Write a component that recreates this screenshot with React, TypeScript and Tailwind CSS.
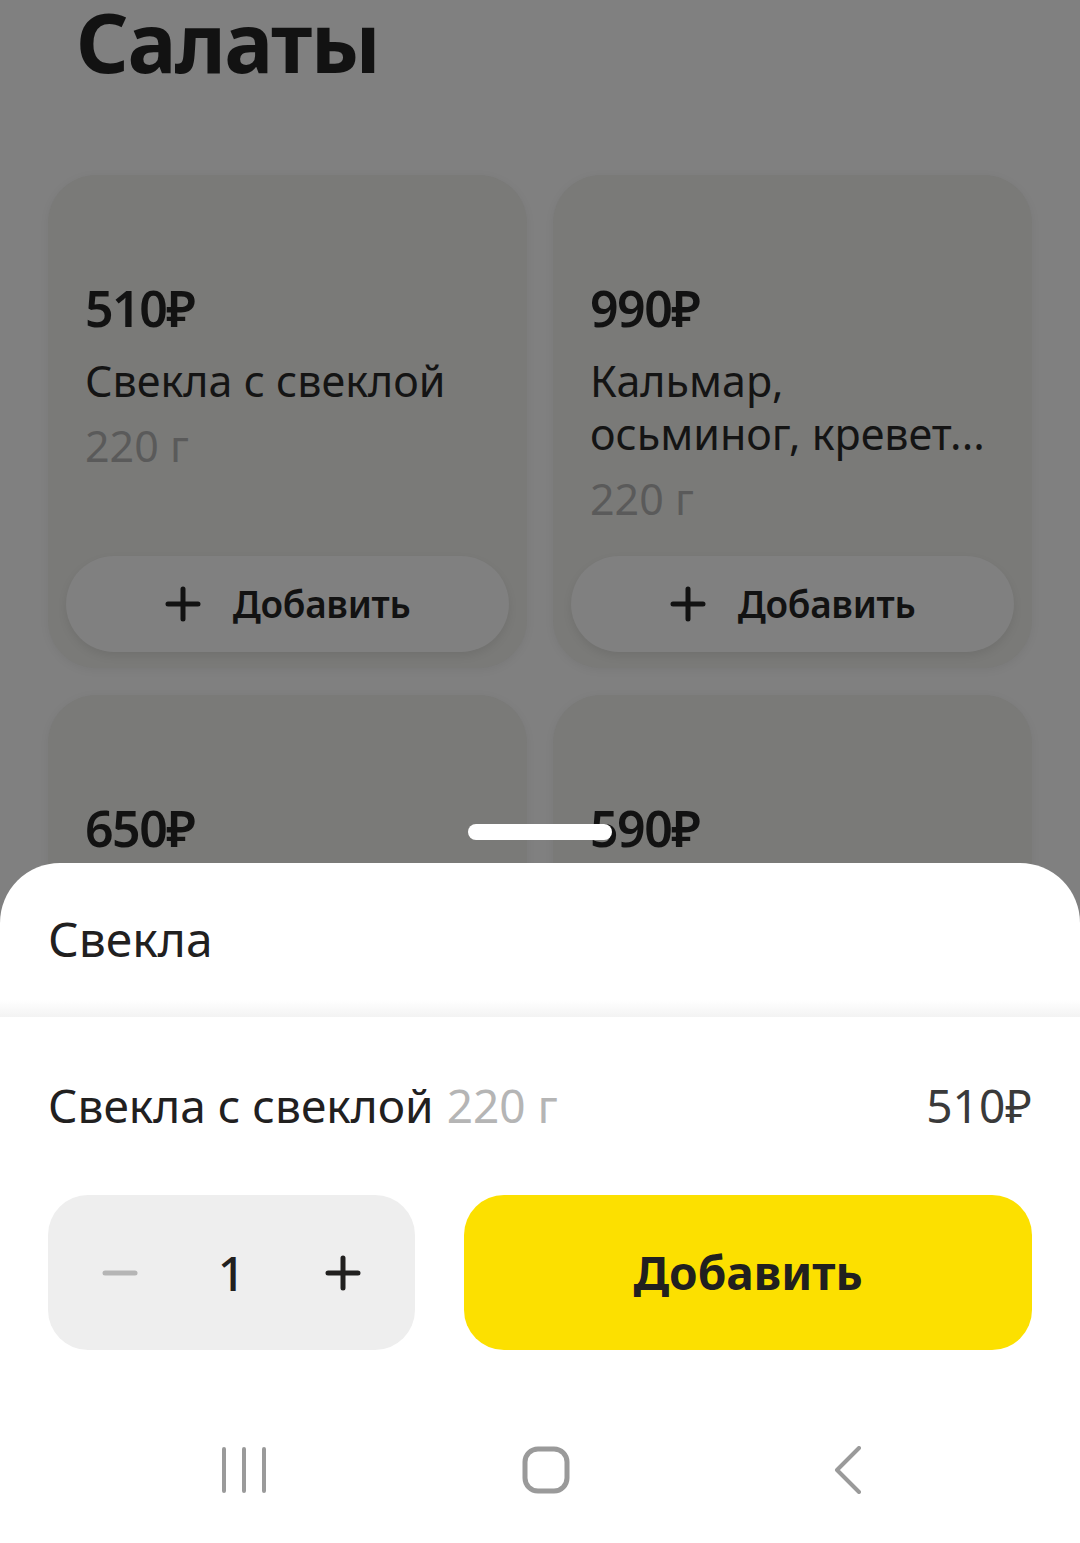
import React from 'react';

type Dish = {
  price: string;
  name?: React.ReactNode;
  weight?: string;
};

// the second row is hidden under the sheet, only the prices show
const dishes: Dish[] = [
  { price: '510₽', name: 'Свекла с свеклой', weight: '220 г' },
  {
    price: '990₽',
    name: (
      <>
        Кальмар,
        <br />
        осьминог, кревет...
      </>
    ),
    weight: '220 г',
  },
  { price: '650₽' },
  { price: '590₽' },
];

function PlusIcon({ className }: { className?: string }) {
  return (
    <svg viewBox="0 0 36 36" className={className} fill="none">
      <path d="M18 3v30M3 18h30" stroke="currentColor" strokeWidth="5" strokeLinecap="round" />
    </svg>
  );
}

function DishCard({ dish }: { dish: Dish }) {
  return (
    <div className="flex h-[493px] flex-col rounded-[48px] bg-[#7a7a78] shadow-[0_2px_10px_rgba(0,0,0,0.06)]">
      <div className="px-[37px] pt-[103px]">
        <div className="text-[50px] font-semibold leading-[60px] tracking-[-1.5px] text-[#121212]">
          {dish.price}
        </div>
        {dish.name && (
          <div className="mt-[16px] text-[43px] leading-[53px] text-[#141414]">{dish.name}</div>
        )}
        {dish.weight && (
          <div className="mt-[12px] text-[43px] leading-[53px] text-[#5a5a5a]">{dish.weight}</div>
        )}
      </div>
      <button className="mx-[18px] mb-4 mt-auto flex h-[96px] items-center justify-center gap-[32px] rounded-full bg-[#808080] shadow-[0_4px_10px_rgba(0,0,0,0.08)]">
        <PlusIcon className="h-[36px] w-[36px] text-[#121212]" />
        <span className="text-[37px] font-semibold tracking-[-0.3px] text-[#121212]">Добавить</span>
      </button>
    </div>
  );
}

export default function App() {
  return (
    <div
      className="relative h-[1543px] w-[1080px] overflow-hidden bg-[#808080]"
      style={{ fontFamily: '"Noto Sans", "DejaVu Sans", sans-serif' }}
    >
      <h1 className="ml-[76px] mt-[-3px] text-[82px] font-bold leading-[88px] tracking-[-1.5px] text-[#121212]">
        Салаты
      </h1>

      <div className="mt-[90px] grid grid-cols-2 gap-x-[26px] gap-y-[27px] px-12">
        {dishes.map((dish, i) => (
          <DishCard key={i} dish={dish} />
        ))}
      </div>

      {/* drag handle over the dimmed list */}
      <div className="absolute left-[468px] top-[824px] h-[16px] w-[144px] rounded-full bg-white" />

      {/* bottom sheet */}
      <div className="absolute inset-x-0 bottom-0 top-[863px] rounded-t-[60px] bg-white">
        <div className="px-12 pt-[46px] text-[48px] leading-[60px] text-[#21201f]">Свекла</div>
        <div className="mt-[31px] h-[17px] bg-gradient-to-b from-white to-[#f3f3f3]" />

        <div className="mt-[60px] flex items-center justify-between px-12 text-[46px] leading-[56px]">
          <div className="flex items-baseline gap-[13px]">
            <span className="text-[#21201f]">Свекла с свеклой</span>
            <span className="text-[#b5b5b5]">220 г</span>
          </div>
          <div className="text-[#3a3a3a]">510₽</div>
        </div>

        <div className="mt-[62px] flex gap-[49px] px-12">
          <div className="flex h-[155px] w-[367px] items-center justify-between rounded-[40px] bg-[#eeeeee] px-[54px]">
            <svg viewBox="0 0 36 36" className="h-[36px] w-[36px]" fill="none">
              <path d="M3 18h30" stroke="#b5b5b5" strokeWidth="5" strokeLinecap="round" />
            </svg>
            <span className="text-[48px] font-medium text-[#21201f]">1</span>
            <PlusIcon className="h-[36px] w-[36px] text-[#21201f]" />
          </div>
          <button className="flex h-[155px] flex-1 items-center justify-center rounded-[40px] bg-[#fce000] text-[46px] font-bold text-[#21201f]">
            Добавить
          </button>
        </div>

        {/* system navigation bar */}
        <div className="mt-[96px] flex items-center">
          <svg viewBox="0 0 44 46" className="ml-[222px] h-[46px] w-[44px]" fill="none">
            <path d="M2 2v42M22 2v42M42 2v42" stroke="#9a9a9a" strokeWidth="4" strokeLinecap="round" />
          </svg>
          <svg viewBox="0 0 48 48" className="ml-[256px] h-[48px] w-[48px]" fill="none">
            <rect x="3" y="3" width="42" height="42" rx="13" stroke="#9a9a9a" strokeWidth="5" />
          </svg>
          <svg viewBox="0 0 28 48" className="ml-[264px] h-[48px] w-[28px]" fill="none">
            <path d="M25 2L3 24l22 22" stroke="#9a9a9a" strokeWidth="4" strokeLinecap="round" strokeLinejoin="round" />
          </svg>
        </div>
      </div>
    </div>
  );
}
